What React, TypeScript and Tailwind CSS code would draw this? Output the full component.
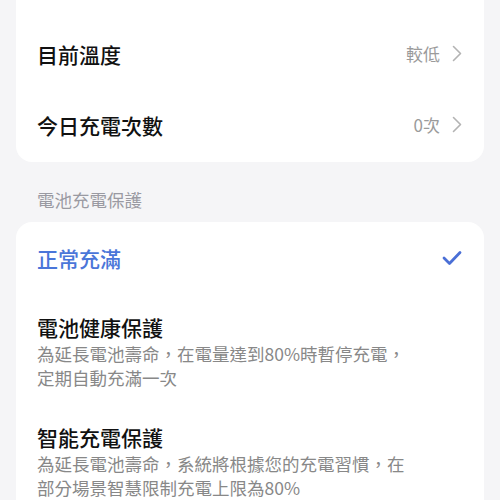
import React from "react";

const font = { fontFamily: '"Noto Sans CJK TC", "Noto Sans", sans-serif' };

function Chevron() {
  return (
    <svg width="10" height="17" viewBox="0 0 10 17" className="ml-[12px]">
      <polyline points="1.5,1.5 8.5,8.5 1.5,15.5" fill="none" stroke="#b3b3b3" strokeWidth="1.6" strokeLinecap="round" strokeLinejoin="round" />
    </svg>
  );
}

function Row({ label, value }: { label: string; value: string }) {
  return (
    <div className="flex h-[71px] items-center justify-between">
      <span className="text-[21px] font-medium leading-[30px] text-[#111]">{label}</span>
      <div className="flex items-center">
        <span className="text-[17px] text-[#9b9b9b]">{value}</span>
        <Chevron />
      </div>
    </div>
  );
}

function Option({ title, desc }: { title: string; desc: string[] }) {
  return (
    <div className="pt-[18px] pb-[14px]">
      <div className="text-[21px] font-medium leading-[30px] text-[#111]">{title}</div>
      {desc.map((d, i) => (
        <div key={i} className="text-[17.5px] leading-[24px] text-[#888]">{d}</div>
      ))}
    </div>
  );
}

export default function App() {
  return (
    <div className="w-[500px] h-[500px] overflow-hidden bg-[#f5f5f7] px-[16px]" style={font}>
      <div className="rounded-b-[16px] bg-white pt-[18px] pl-[21px] pr-[22px]">
        <Row label="目前溫度" value="較低" />
        <Row label="今日充電次數" value="0次" />
        <div className="h-[2px]" />
      </div>
      <div className="pl-[21px] pt-[27px] pb-[11px] text-[17.5px] leading-[22px] text-[#9a9aa2]">電池充電保護</div>
      <div className="rounded-t-[16px] bg-white pl-[21px] pr-[22px]">
        <div className="flex h-[72px] items-center justify-between">
          <span className="text-[21px] font-medium leading-[30px] text-[#4a76d9]">正常充滿</span>
          <svg width="20" height="16" viewBox="0 0 20 16">
            <polyline points="2,8 7.5,13.5 18,2.5" fill="none" stroke="#4a6fd6" strokeWidth="2.8" strokeLinecap="round" strokeLinejoin="round" />
          </svg>
        </div>
        <Option title="電池健康保護" desc={["為延長電池壽命，在電量達到80%時暫停充電，", "定期自動充滿一次"]} />
        <Option title="智能充電保護" desc={["為延長電池壽命，系統將根據您的充電習慣，在", "部分場景智慧限制充電上限為80%"]} />
      </div>
    </div>
  );
}
